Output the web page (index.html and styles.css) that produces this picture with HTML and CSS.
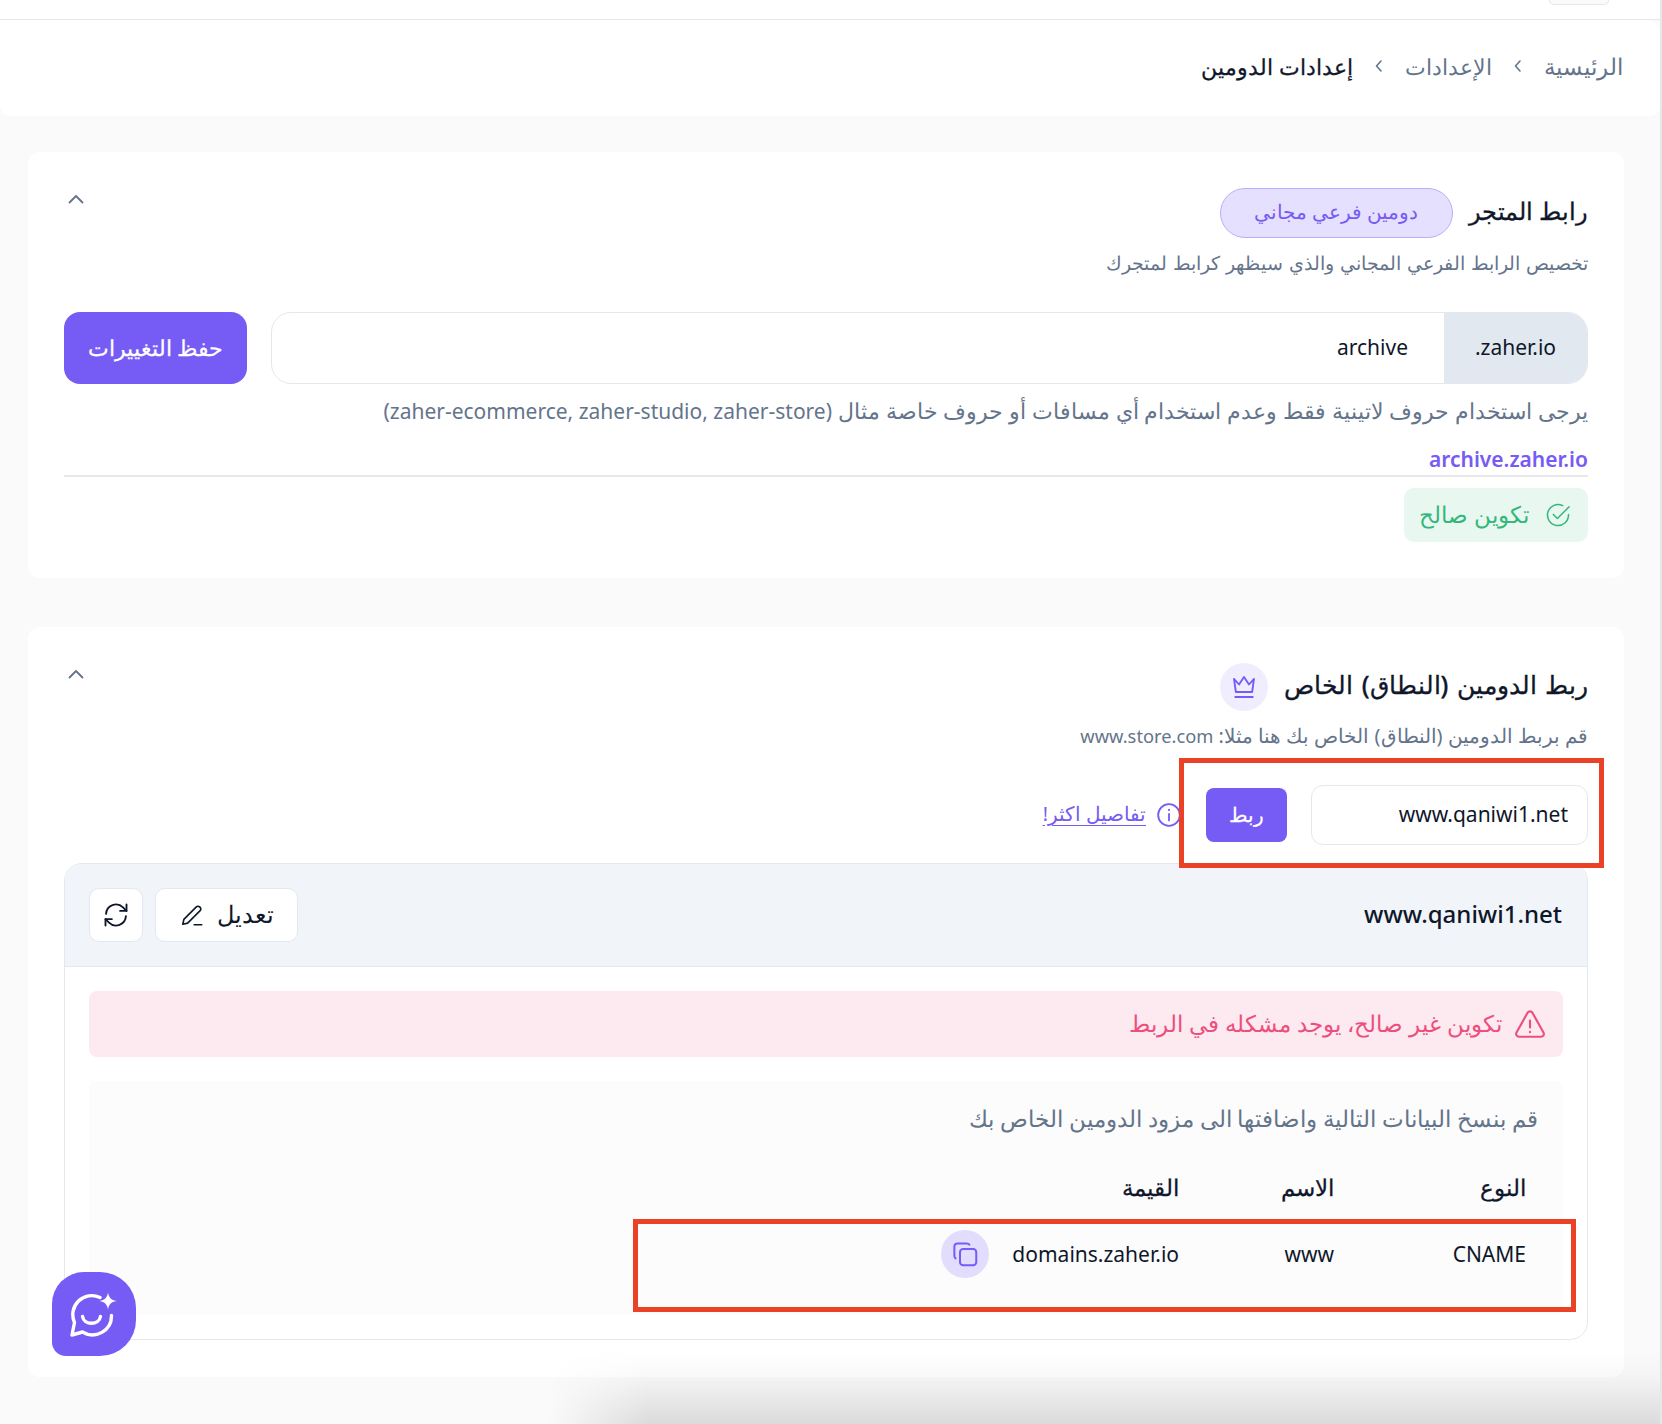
FILE: index.html
```html
<!DOCTYPE html>
<html lang="ar" dir="rtl">
<head>
<meta charset="utf-8">
<title>إعدادات الدومين</title>
<link rel="stylesheet" href="styles.css">
</head>
<body>
<header class="topbar"><span class="topbar-btn"></span></header>
<nav class="crumbs">
  <span class="crumb">الرئيسية</span>
  <svg class="crumb-sep" viewBox="0 0 10 14"><path d="M7 2 2.500 7 7 12"/></svg>
  <span class="crumb crumb-mid">الإعدادات</span>
  <svg class="crumb-sep" viewBox="0 0 10 14"><path d="M7 2 2.500 7 7 12"/></svg>
  <span class="crumb crumb-now">إعدادات الدومين</span>
</nav>
<main class="content">
  <section class="card card-store">
    <div class="card-head">
      <div class="head-main">
        <h2 class="card-title">رابط المتجر</h2>
        <span class="badge">دومين فرعي مجاني</span>
      </div>
      <svg class="collapse" viewBox="0 0 16 10"><path d="M1.500 8.500 8 2l6.500 6.500"/></svg>
    </div>
    <p class="card-sub">تخصيص الرابط الفرعي المجاني والذي سيظهر كرابط لمتجرك</p>
    <div class="sub-row">
      <div class="sub-field">
        <span class="suffix" dir="ltr">.zaher.io</span>
        <span class="sub-value" dir="ltr">archive</span>
      </div>
      <button class="save-btn">حفظ التغييرات</button>
    </div>
    <p class="hint">يرجى استخدام حروف لاتينية فقط وعدم استخدام أي مسافات أو حروف خاصة مثال <span class="hint-latin">(zaher-ecommerce, zaher-studio, zaher-store)</span></p>
    <p class="store-link" dir="ltr">archive.zaher.io</p>
    <div class="valid-wrap">
      <div class="valid">
        <svg class="valid-icon" viewBox="0 0 24 24"><path d="M21 11.500V12a9 9 0 1 1-5-8.060"/><path d="m8 11.500 3.500 3.500L21.500 5"/></svg>
        <span class="lift">تكوين صالح</span>
      </div>
    </div>
  </section>

  <section class="card card-domain">
    <div class="card-head head-domain">
      <div class="head-main">
        <h2 class="card-title title-domain">ربط الدومين (النطاق) الخاص</h2>
        <span class="crown">
          <svg viewBox="0 0 24 24"><path d="M4 5.500l4 4.500 4-6 4 6 4-4.500-1.500 10.500h-13z"/><path d="M5 20h14"/></svg>
        </span>
      </div>
      <svg class="collapse" viewBox="0 0 16 10"><path d="M1.500 8.500 8 2l6.500 6.500"/></svg>
    </div>
    <p class="card-sub sub-domain">قم بربط الدومين (النطاق) الخاص بك هنا مثلا: <span class="sub-latin">www.store.com</span></p>
    <div class="connect-row">
      <span class="connect-value" dir="ltr">www.qaniwi1.net</span>
      <button class="connect-btn">ربط</button>
      <svg class="info" viewBox="0 0 24 24"><circle cx="12" cy="12" r="10"/><path d="M12 11v6"/><path d="M12 7v.5"/></svg>
      <a class="more" href="#">تفاصيل اكثر!</a>
    </div>
    <div class="panel">
      <div class="panel-head">
        <span class="panel-name" dir="ltr">www.qaniwi1.net</span>
        <div class="panel-actions">
          <button class="tool-btn edit-btn">
            <span class="lift-more">تعديل</span>
            <svg viewBox="0 0 24 24"><path d="M3.500 20.500l1-4.500L16 4.500a2.100 2.100 0 0 1 3 0l.5.5a2.100 2.100 0 0 1 0 3L8 19.500z"/><path d="M14 21h7"/></svg>
          </button>
          <button class="tool-btn icon-btn" aria-label="refresh">
            <svg viewBox="0 0 24 24"><path d="M3.500 11A8.500 8.500 0 0 1 18 5.500L21 8.500"/><path d="M21 3v5.500h-5.500"/><path d="M20.500 13A8.500 8.500 0 0 1 6 18.500L3 15.500"/><path d="M3 21v-5.500h5.500"/></svg>
          </button>
        </div>
      </div>
      <div class="panel-body">
        <div class="alert">
          <svg viewBox="0 0 24 24"><path d="M10.300 4 2.500 18a2 2 0 0 0 1.700 3h15.600a2 2 0 0 0 1.700-3L13.700 4a2 2 0 0 0-3.400 0z"/><path d="M12 9.500v5"/><path d="M12 17.500v.3"/></svg>
          <span class="lift">تكوين غير صالح، يوجد مشكله في الربط</span>
        </div>
        <div class="records">
          <p class="records-note">قم بنسخ البيانات التالية واضافتها الى مزود الدومين الخاص بك</p>
          <div class="rec-grid rec-head">
            <span>النوع</span><span>الاسم</span><span>القيمة</span>
          </div>
          <div class="rec-grid rec-row">
            <span dir="ltr" class="cell">CNAME</span>
            <span dir="ltr" class="cell">www</span>
            <div class="value-cell">
              <span dir="ltr">domains.zaher.io</span>
              <span class="copy">
                <svg viewBox="0 0 24 24"><rect x="8" y="8" width="13" height="13" rx="2.500"/><path d="M15.500 4.500A2.500 2.500 0 0 0 13.500 3.500H6A2.500 2.500 0 0 0 3.500 6v7.500a2.500 2.500 0 0 0 1 2"/></svg>
              </span>
            </div>
          </div>
        </div>
      </div>
    </div>
  </section>
</main>
<div class="mark mark-one"></div>
<div class="mark mark-two"></div>
<button class="fab" aria-label="chat">
  <svg viewBox="0 0 48 48"><path d="M30 7.500A19 19 0 0 0 4.500 32.500L2 45l10.500-3A19 19 0 0 0 41.500 25.500"/><path d="M12.500 26.500c1.500 9 16.500 9 18 0"/><path class="spark" d="M38 2.500c.8 5 3 7.500 8.500 8.500-5.500 1-7.700 3.500-8.500 8.500-.8-5-3-7.500-8.500-8.500 5.500-1 7.700-3.500 8.500-8.500z"/></svg>
</button>
<div class="shade"></div>
<div class="edge"></div>
</body>
</html>
```

FILE: styles.css
```css
* { box-sizing: border-box; }
html, body { margin: 0; padding: 0; }
body {
  position: relative;
  width: 1662px;
  height: 1424px;
  overflow: hidden;
  background: #fafafa;
  color: #0f172a;
  font-family: "Noto Sans", sans-serif;
  font-size: 18px;
}
p, h2 { margin: 0; font-weight: 400; }
button { font-family: inherit; cursor: pointer; }
svg { fill: none; stroke: currentColor; stroke-linecap: round; stroke-linejoin: round; display: block; flex: none; }
.lift { padding-bottom: 2px; }
.lift-more { padding-bottom: 4px; }

.topbar { height: 20px; background: #fff; border-bottom: 1px solid #e5e7eb; padding-right: 53px; }
.topbar-btn { display: block; width: 60px; height: 5px; background: #fafafa; border: 1px solid #e2e8f0; border-top: 0; border-radius: 0 0 8px 8px; }

.crumbs {
  width: 1660px; margin-right: 2px;
  height: 96px; background: #fff; border-radius: 0 14px 10px 10px;
  display: flex; align-items: center; gap: 21px;
  padding: 0 37px 4px 0; font-size: 23px; color: #64748b;
}
.crumb-sep { width: 10px; height: 14px; stroke-width: 1.600; }
.crumb-mid { font-size: 22px; }
.crumb-now { color: #0f172a; font-weight: 500; font-size: 22.300px; -webkit-text-stroke: .25px #0f172a; }

.content { padding: 36px 38px 0 28px; display: flex; flex-direction: column; gap: 49px; }
.card { background: #fff; border-radius: 12px; padding: 36px 36px 0; }
.card-store { height: 426px; }
.card-domain { height: 750px; }
.card-head { display: flex; justify-content: space-between; align-items: flex-start; min-height: 50px; }
.head-main { display: flex; align-items: center; gap: 16px; }
.card-title { font-size: 24px; font-weight: 500; color: #0f172a; padding-bottom: 6px; -webkit-text-stroke: .3px #0f172a; }
.title-domain { font-size: 25px; word-spacing: 1.800px; }
.badge { width: 233px; height: 50px; padding-bottom: 3px; display: flex; align-items: center; justify-content: center; background: #e4e0fd; border: 1px solid #b9aefa; border-radius: 25px; color: #775bf5; font-size: 19.500px; }
.collapse { width: 16px; height: 10px; stroke: #64748b; stroke-width: 1.800; margin-left: 4px; margin-top: 6px; }
.card-sub { margin-top: 12px; color: #64748b; font-size: 19px; word-spacing: 1px; line-height: 26px; }

.sub-row { display: flex; gap: 24px; margin-top: 36px; }
.sub-field { flex: 1; height: 72px; display: flex; align-items: center; border: 1px solid #e5e7eb; border-radius: 20px; overflow: hidden; background: #fff; }
.suffix { width: 143px; align-self: stretch; display: flex; align-items: center; justify-content: center; padding-bottom: 2px; background: #e2e8f0; font-size: 21px; }
.sub-value { padding: 0 36px 2px 0; font-size: 21px; }
.save-btn { width: 183px; height: 72px; padding: 0 0 2px; background: #775bf5; color: #fff; border: 0; border-radius: 16px; font-size: 22px; font-weight: 500; -webkit-text-stroke: .25px #fff; }
.hint { margin-top: 13px; color: #64748b; font-size: 22.200px; line-height: 28px; }
.hint-latin { font-size: 21px; }
.store-link { margin-top: 20px; text-align: right; font-size: 21px; font-weight: 600; color: #775bf5; line-height: 28px; padding-bottom: 2px; border-bottom: 2px solid #e5e7eb; }
.valid-wrap { display: flex; margin-top: 11px; }
.valid { width: 184px; height: 54px; background: #e9f7f1; border-radius: 10px; display: flex; align-items: center; gap: 15px; padding-right: 16px; color: #34b77c; font-size: 22.700px; }
.valid-icon { width: 28px; height: 28px; stroke-width: 1.300; }

.head-domain { min-height: 48px; }
.crown { width: 48px; height: 48px; border-radius: 50%; background: #f0edfe; display: flex; align-items: center; justify-content: center; color: #775bf5; }
.crown svg { width: 30px; height: 30px; stroke-width: 1.500; }
.sub-domain { margin-top: 12px; font-size: 19.900px; word-spacing: 0; }
.sub-latin { font-size: 18.300px; }

.connect-row { display: flex; align-items: center; height: 60px; margin-top: 36px; }
.connect-value { width: 277px; height: 60px; display: flex; align-items: center; justify-content: flex-end; padding: 0 19px 2px; border: 1px solid #e5e7eb; border-radius: 12px; font-size: 21px; }
.connect-btn { width: 81px; height: 54px; margin-right: 24px; padding: 0 0 2px; background: #775bf5; color: #fff; border: 0; border-radius: 8px; font-size: 20px; font-weight: 500; -webkit-text-stroke: .25px #fff; }
.info { width: 26px; height: 26px; margin-right: 24px; stroke: #775bf5; stroke-width: 1.700; }
.more { margin: 0 10px 3px 0; color: #775bf5; font-size: 19.600px; text-decoration: underline; text-underline-offset: 4px; }

.panel { margin-top: 18px; border: 1px solid #e2e8f0; border-radius: 18px; height: 477px; overflow: hidden; }
.panel-head { height: 103px; background: #f1f5f9; border-bottom: 1px solid #e2e8f0; display: flex; justify-content: space-between; align-items: center; padding: 0 25px 0 24px; }
.panel-name { font-size: 24px; font-weight: 500; color: #0f172a; padding-bottom: 4px; }
.panel-actions { display: flex; gap: 12px; }
.tool-btn { height: 54px; border: 1px solid #e2e8f0; border-radius: 10px; background: #fff; color: #0f172a; display: flex; align-items: center; justify-content: center; padding: 0; font-size: 24px; }
.edit-btn { width: 143px; gap: 12px; }
.edit-btn svg { width: 26px; height: 26px; stroke-width: 1.500; }
.icon-btn { width: 54px; }
.icon-btn svg { width: 28px; height: 28px; stroke-width: 1.600; }
.panel-body { padding: 24px 24px 0; }
.alert { height: 66px; background: #fdeaf0; border-radius: 8px; display: flex; align-items: center; gap: 11px; padding-right: 16px; color: #ec4f7d; font-size: 22.800px; }
.alert svg { width: 34px; height: 34px; stroke-width: 1.500; }
.records { margin-top: 24px; height: 234px; background: #fcfcfc; border-radius: 8px; padding: 24px 25px 0; }
.records-note { color: #64748b; font-size: 22.700px; line-height: 28px; }
.rec-grid { display: grid; grid-template-columns: 192px 155px 1fr; padding-right: 12px; }
.rec-head { margin-top: 40px; font-size: 23px; font-weight: 500; line-height: 28px; -webkit-text-stroke: .25px #0f172a; }
.rec-row { margin-top: 29px; font-size: 21px; height: 48px; align-items: center; }
.cell { text-align: right; }
.value-cell { display: flex; align-items: center; gap: 23px; }
.copy { width: 48px; height: 48px; border-radius: 50%; background: #e2ddfd; color: #775bf5; display: flex; align-items: center; justify-content: center; }
.copy svg { width: 30px; height: 30px; stroke-width: 1.600; }

.mark { position: absolute; border: 5px solid #ea4226; pointer-events: none; }
.mark-one { left: 1179px; top: 758px; width: 425px; height: 110px; }
.mark-two { left: 633px; top: 1219px; width: 943px; height: 93px; }

.fab { position: absolute; left: 52px; top: 1272px; width: 84px; height: 84px; border: 0; padding: 0; background: #775bf5; color: #fff; border-radius: 32px 36px 36px 14px; display: flex; align-items: center; justify-content: center; }
.fab svg { width: 48px; height: 48px; stroke-width: 3.400; }
.fab .spark { fill: #fff; stroke: none; }

.shade { position: absolute; left: 0; right: 0; top: 1350px; height: 74px; background: linear-gradient(to bottom, rgba(0,0,0,0), rgba(0,0,0,.022) 36%, rgba(0,0,0,.12)); pointer-events: none; -webkit-mask-image: linear-gradient(to right, transparent 33%, #000 39%); mask-image: linear-gradient(to right, transparent 33%, #000 39%); }
.edge { position: absolute; top: 0; bottom: 0; right: 0; width: 2px; background: #e5e7eb; }
```
